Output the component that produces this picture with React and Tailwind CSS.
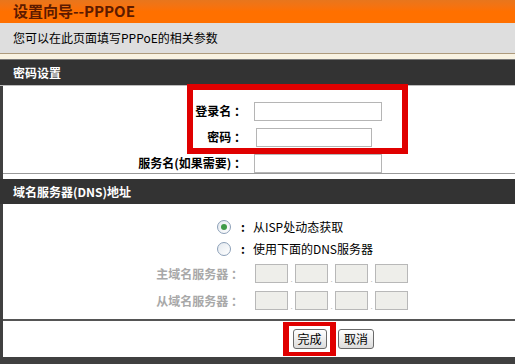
import React from 'react'

const font = { fontFamily: '"Noto Sans CJK SC", "Liberation Sans", sans-serif' }

function Field({ label, width = 'w-[128px]', ml = 'ml-[4px]' }) {
	return (
		<div className="flex items-center h-[26px]">
			<div className="w-[247px] text-right pr-[4px] text-[12px] font-bold text-black whitespace-nowrap">{label}</div>
			<div className={`h-[19px] ${width} ${ml} border border-[#b5b5b5] bg-white`} />
		</div>
	)
}

function Radio({ checked, label }) {
	return (
		<div className="flex items-center h-[22px]">
			<div className="w-[217px]" />
			<div className="w-[14px] h-[14px] rounded-full border border-[#8ca0b8] bg-gradient-to-br from-[#e4e9ef] to-white flex items-center justify-center">
				{checked && <div className="w-[6px] h-[6px] rounded-full bg-[#3f9a48]" />}
			</div>
			<span className="ml-[10px] text-[12px] font-bold">:</span>
			<span className="ml-[8px] text-[12px] text-black">{label}</span>
		</div>
	)
}

function IpRow({ label }) {
	return (
		<div className="flex items-center h-[27px]">
			<div className="w-[247px] text-right pr-[4px] text-[12px] font-bold text-[#a8a8a8] whitespace-nowrap">{label}</div>
			<div className="ml-[8px] flex items-end gap-[1px]">
				{[0, 1, 2, 3].map(i => (
					<React.Fragment key={i}>
						{i > 0 && <span className="w-[5px] text-[8px] leading-none text-[#bbb] text-center">.</span>}
						<div className="w-[33px] h-[19px] border border-[#b8b8b8] bg-[#eeeeea]" />
					</React.Fragment>
				))}
			</div>
		</div>
	)
}

function Button({ children, w }) {
	return (
		<button className={`h-[20px] ${w} border border-[#6a6a6a] rounded-[3px] bg-gradient-to-b from-white to-[#dcdcdc] text-[12px] leading-none text-black`}>
			{children}
		</button>
	)
}

export default function App() {
	return (
		<div className="w-[515px] h-[364px] overflow-hidden bg-white flex flex-col" style={font}>
			<div className="h-[23px] shrink-0 bg-gradient-to-b from-[#e8761c] via-[#ff7000] to-[#ff7000] flex items-center pl-[13px]">
				<span className="text-[15px] font-bold text-[#5c1a00]">设置向导--PPPOE</span>
			</div>
			<div className="h-[30px] shrink-0 bg-[#dedede] flex items-center pl-[13px] text-[12px] text-black">
				您可以在此页面填写PPPoE的相关参数
			</div>
			<div className="h-[1px] shrink-0 bg-[#ad9a7c]" />
			<div className="h-[5px] shrink-0 bg-[#f8f2e2]" />
			<div className="h-[26px] shrink-0 bg-[#333333] border-t border-[#777] flex items-center pl-[13px] text-[12px] font-bold text-white">
				密码设置
			</div>

			<div className="flex-1 flex flex-col border-l-[3px] border-[#404040]">
				<div className="relative h-[88px] shrink-0 border-t border-[#bdbdbd] pt-[12px] -ml-[3px] pl-[3px]">
					<Field label="登录名 ：" />
					<Field label="密码 ：" width="w-[116px]" ml="ml-[6px]" />
					<Field label="服务名(如果需要) ：" />
					<div className="absolute left-[187px] top-[-2px] w-[221px] h-[70px] border-[6px] border-[#e00000]" />
				</div>
				<div className="h-[1px] shrink-0 bg-[#999]" />
				<div className="h-[5px] shrink-0 bg-white" />
				<div className="h-[25px] shrink-0 bg-[#333333] -ml-[3px] flex items-center pl-[13px] text-[12px] font-bold text-white">
					域名服务器(DNS)地址
				</div>
				<div className="h-[115px] shrink-0 pt-[12px] -ml-[3px]">
					<Radio checked label="从ISP处动态获取" />
					<Radio label="使用下面的DNS服务器" />
					<IpRow label="主域名服务器 ：" />
					<IpRow label="从域名服务器 ：" />
				</div>
				<div className="h-[2px] shrink-0 bg-[#555]" />
				<div className="flex-1 flex items-center gap-[2px] pl-[280px] pb-[1px]">
					<div className="flex items-center justify-center w-[53px] h-[34px] bg-[#e00000]">
						<div className="w-[41px] h-[26px] bg-white flex items-center justify-center">
							<Button w="w-[34px]">完成</Button>
						</div>
					</div>
					<Button w="w-[36px]">取消</Button>
				</div>
			</div>
			<div className="h-[7px] shrink-0 bg-[#404040]" />
		</div>
	)
}
